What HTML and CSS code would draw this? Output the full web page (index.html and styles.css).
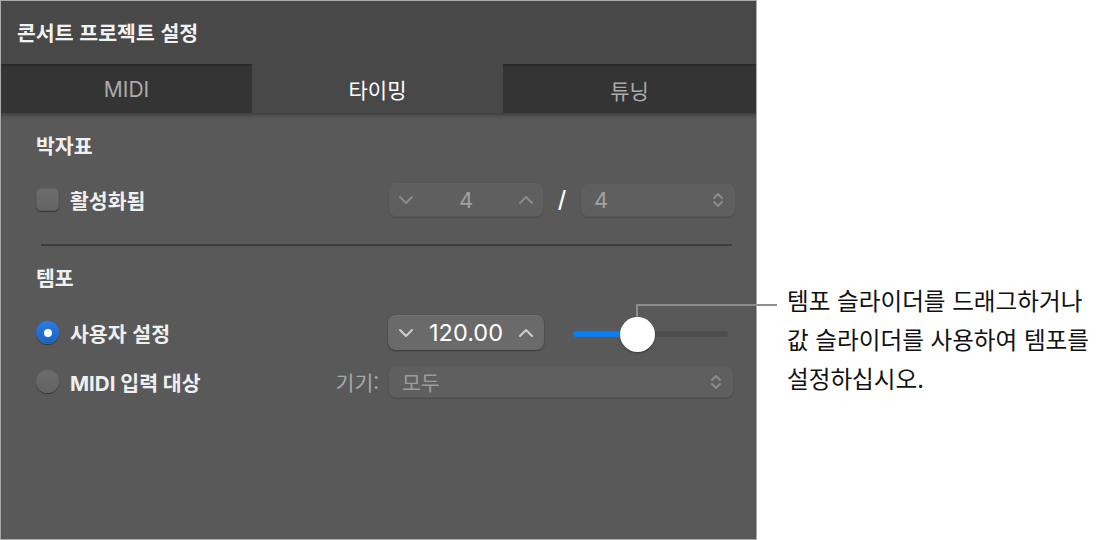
FILE: index.html
```html
<!DOCTYPE html>
<html lang="ko">
<head>
<meta charset="utf-8">
<title>콘서트 프로젝트 설정</title>
<link rel="stylesheet" href="styles.css">
</head>
<body>
<div class="page">
  <div class="panel">
    <div class="header">콘서트 프로젝트 설정</div>
    <div class="tabs">
      <div class="tab off">MIDI</div>
      <div class="tab on">타이밍</div>
      <div class="tab off">튜닝</div>
    </div>
    <div class="content">
      <div class="section-title">박자표</div>
      <div class="row row-sig">
        <div class="label-area">
          <span class="checkbox"></span>
          <span class="label">활성화됨</span>
        </div>
        <div class="stepper">
          <svg class="chev" width="16" height="10" viewBox="0 0 16 10"><path d="M2 2l6 6 6-6"/></svg>
          <span class="num">4</span>
          <svg class="chev" width="16" height="10" viewBox="0 0 16 10"><path d="M2 8l6-6 6 6"/></svg>
        </div>
        <div class="slash">/</div>
        <div class="popup small">
          <span class="num">4</span>
          <svg class="updown" width="12" height="16" viewBox="0 0 12 16"><path d="M2 6l4-4 4 4M2 10l4 4 4-4"/></svg>
        </div>
      </div>
      <div class="divider"></div>
      <div class="section-title tempo">템포</div>
      <div class="row row-tempo">
        <div class="label-area">
          <span class="radio on"></span>
          <span class="label">사용자 설정</span>
        </div>
        <div class="stepper active">
          <svg class="chev" width="16" height="10" viewBox="0 0 16 10"><path d="M2 2l6 6 6-6"/></svg>
          <span class="num">120.00</span>
          <svg class="chev" width="16" height="10" viewBox="0 0 16 10"><path d="M2 8l6-6 6 6"/></svg>
        </div>
        <div class="slider">
          <div class="track"><div class="fill"></div></div>
          <div class="thumb"></div>
        </div>
      </div>
      <div class="row row-midi">
        <div class="label-area split">
          <div class="left">
            <span class="radio"></span>
            <span class="label">MIDI 입력 대상</span>
          </div>
          <span class="device">기기:</span>
        </div>
        <div class="popup wide">
          <span class="dim">모두</span>
          <svg class="updown" width="12" height="16" viewBox="0 0 12 16"><path d="M2 6l4-4 4 4M2 10l4 4 4-4"/></svg>
        </div>
      </div>
    </div>
  </div>
  <div class="callout">템포 슬라이더를 드래그하거나<br>값 슬라이더를 사용하여 템포를<br>설정하십시오.</div>
  <div class="connector"></div>
</div>
</body>
</html>
```

FILE: styles.css
```css
html, body {
  margin: 0;
  padding: 0;
  background: #ffffff;
}

body {
  font-family: Inter, "Noto Sans CJK KR", sans-serif;
}

.page {
  position: relative;
  display: flex;
  width: 1096px;
  height: 540px;
}

.panel {
  box-sizing: border-box;
  width: 757px;
  height: 540px;
  border: 1px solid #ababab;
  background: #595959;
  display: flex;
  flex-direction: column;
  flex-shrink: 0;
}

.header {
  height: 63px;
  background: #484848;
  color: #f2f2f2;
  font-family: "Noto Sans CJK KR", sans-serif;
  font-weight: 700;
  font-size: 20.5px;
  display: flex;
  align-items: center;
  padding-left: 16px;
  padding-bottom: 2px;
  box-sizing: border-box;
}

.tabs {
  display: grid;
  grid-template-columns: 251px 251px 1fr;
  height: 49px;
}

.tab {
  display: flex;
  align-items: center;
  justify-content: center;
  font-size: 21px;
  box-sizing: border-box;
}

.tab.off {
  background: #343434;
  color: #ababab;
  border-top: 2px solid #2a2a2a;
}

.tab.on {
  background: #484848;
  color: #ffffff;
}

.content {
  flex: 1;
  padding: 20px 0 0 35px;
  box-shadow: inset 0 4px 4px -2px rgba(0, 0, 0, 0.35);
}

.section-title {
  font-family: "Noto Sans CJK KR", sans-serif;
  font-weight: 700;
  font-size: 20.5px;
  color: #f0f0f0;
  line-height: 24px;
  height: 24px;
}

.row {
  display: flex;
  align-items: center;
}

.row-sig {
  margin-top: 25px;
  height: 35px;
}

.label-area {
  width: 352px;
  display: flex;
  align-items: center;
  flex-shrink: 0;
}

.label-area.split {
  justify-content: space-between;
  box-sizing: border-box;
  padding-right: 9px;
}

.left {
  display: flex;
  align-items: center;
}

.label {
  font-family: "Noto Sans CJK KR", sans-serif;
  font-weight: 700;
  font-size: 20.5px;
  color: #f0f0f0;
  margin-left: 11px;
}

.row-midi .label {
  font-family: Inter, "Noto Sans CJK KR", sans-serif;
}

.checkbox {
  width: 23px;
  height: 23px;
  box-sizing: border-box;
  border-radius: 5px;
  background: linear-gradient(#6d6d6d, #646464);
  box-shadow: 0 1px 1px rgba(0, 0, 0, 0.4), inset 0 0 0 0.5px rgba(0, 0, 0, 0.2);
}

.radio {
  width: 23px;
  height: 23px;
  border-radius: 50%;
  background: linear-gradient(#6d6d6d, #626262);
  box-shadow: 0 1px 1px rgba(0, 0, 0, 0.4);
  display: flex;
  align-items: center;
  justify-content: center;
}

.radio.on {
  background: linear-gradient(#2b7be2, #1a64c4);
}

.radio.on::after {
  content: "";
  width: 8px;
  height: 8px;
  border-radius: 50%;
  background: #ffffff;
}

.stepper {
  box-sizing: border-box;
  width: 156px;
  height: 35px;
  border-radius: 8px;
  background: #5f5f5f;
  box-shadow: inset 0 0 0 1px rgba(0, 0, 0, 0.08), 0 1px 1px rgba(0, 0, 0, 0.12);
  display: flex;
  align-items: center;
  justify-content: space-between;
  padding: 0 10px 0 10px;
}

.stepper .num {
  font-size: 22px;
  color: #a2a2a2;
}

.stepper.active {
  background: #6a6a6a;
  box-shadow: 0 1px 2px rgba(0, 0, 0, 0.4), inset 0 1px 0 rgba(255, 255, 255, 0.06);
}

.stepper.active .num {
  color: #ffffff;
  font-size: 23.5px;
}

.chev path,
.updown path {
  fill: none;
  stroke: #8b8b8b;
  stroke-width: 2;
  stroke-linecap: round;
  stroke-linejoin: round;
}

.stepper.active .chev path {
  stroke: #cfcfcf;
}

.slash {
  width: 36px;
  text-align: center;
  font-size: 23px;
  font-weight: 500;
  color: #ffffff;
}

.popup {
  box-sizing: border-box;
  height: 34px;
  border-radius: 8px;
  background: #5f5f5f;
  box-shadow: inset 0 0 0 1px rgba(0, 0, 0, 0.08), 0 1px 1px rgba(0, 0, 0, 0.12);
  display: flex;
  align-items: center;
  justify-content: space-between;
  padding: 0 12px 0 14px;
}

.popup.small {
  width: 156px;
}

.popup.wide {
  width: 346px;
  height: 33px;
}

.popup .num {
  font-size: 22px;
  color: #a2a2a2;
}

.dim {
  font-family: "Noto Sans CJK KR", sans-serif;
  font-size: 20.5px;
  color: #9c9c9c;
}

.device {
  font-family: "Noto Sans CJK KR", sans-serif;
  font-size: 20.5px;
  color: #a8a8a8;
}

.divider {
  margin: 27px 24px 0 5px;
  height: 2px;
  background: #3d3d3d;
}

.section-title.tempo {
  margin-top: 19px;
}

.row-tempo {
  margin-top: 26px;
  height: 35px;
}

.slider {
  position: relative;
  margin-left: 29px;
  width: 155px;
  height: 35px;
  display: flex;
  align-items: center;
}

.track {
  width: 100%;
  height: 6px;
  border-radius: 3px;
  background: #4e4e4e;
  margin-top: 3px;
}

.fill {
  width: 64px;
  height: 6px;
  border-radius: 3px;
  background: #0a7df5;
}

.thumb {
  position: absolute;
  left: 47px;
  top: 2px;
  width: 35px;
  height: 35px;
  border-radius: 50%;
  background: #ffffff;
  box-shadow: 0 1px 2px rgba(0, 0, 0, 0.35);
  z-index: 2;
}

.row-midi {
  margin-top: 15px;
  height: 33px;
}

.callout {
  padding: 281px 0 0 30px;
  font-family: "Noto Sans CJK KR", sans-serif;
  font-size: 23.6px;
  line-height: 39px;
  color: #111111;
  white-space: nowrap;
}

.connector {
  position: absolute;
  left: 636px;
  top: 304px;
  width: 141px;
  height: 18px;
  border-top: 2px solid #8e8e8e;
  border-left: 2px solid #8e8e8e;
  box-sizing: border-box;
  z-index: 1;
}
```
